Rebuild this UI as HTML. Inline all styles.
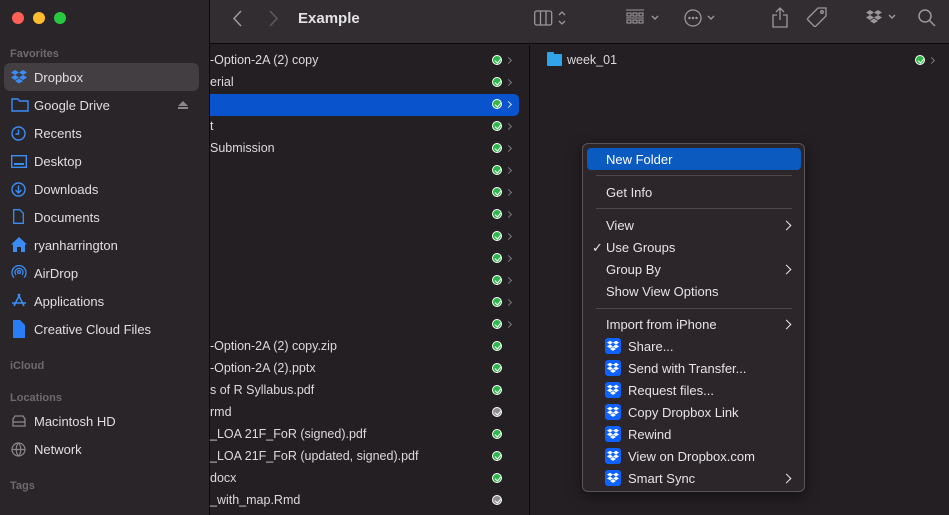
<!DOCTYPE html>
<html><head><style>
*{margin:0;padding:0;box-sizing:border-box}
body{width:949px;height:515px;overflow:hidden;background:#241f23;font-family:"Liberation Sans",sans-serif;color:#dedcde;font-size:13px;position:relative}
.side{position:absolute;left:0;top:0;width:209px;height:515px;background:#2a2528}
.vline{position:absolute;left:209px;top:0;width:1px;height:515px;background:#0c0a0b}
.tb{position:absolute;left:210px;top:0;right:0;height:44px;background:#322d31;border-bottom:1px solid #0c0a0b}
.dot{position:absolute;top:12px;width:12px;height:12px;border-radius:50%}
.sh{position:absolute;left:10px;font-size:11px;color:#6f6a6d;font-weight:bold}
.si{position:absolute;left:34px;font-size:13px;color:#e0dee0}
.ic{position:absolute;left:11px}
.sel{position:absolute;left:4px;top:63px;width:195px;height:28px;background:#433e42;border-radius:6px}
.row{position:absolute;left:210px;font-size:12.5px;color:#dcdadc;white-space:nowrap}
.ck{position:absolute;left:492px;width:10px;height:10px;border-radius:50%;background:#2eb84b;border:1px solid #fff}
.ck::after{content:"";position:absolute;left:2.5px;top:1px;width:3px;height:5px;border:solid #fff;border-width:0 1.5px 1.5px 0;transform:rotate(40deg)}
.ck.g{background:#8f8d8f}
.chv{position:absolute;left:506px;width:5px;height:5px;border-top:1.3px solid #7a767a;border-right:1.3px solid #7a767a;transform:rotate(45deg)}
.menu{position:absolute;left:582px;top:143px;width:223px;height:349px;background:#2c2529;border:1px solid #5a5458;border-radius:6px;box-shadow:0 4px 14px rgba(0,0,0,.5)}
.mi{position:absolute;left:23px;font-size:13px;color:#e6e4e6}
.sep{position:absolute;left:13px;width:196px;height:1px;background:#4e484c}
.ar{position:absolute;left:200px;width:7px;height:7px;border-top:1.6px solid #e6e4e6;border-right:1.6px solid #e6e4e6;transform:rotate(45deg)}
.db{position:absolute;left:22px;width:16px;height:16px;background:#0f62fe;border-radius:3px}
.db svg{position:absolute;left:2px;top:2px}
</style></head><body>
<div class="side">
<div class="dot" style="left:12px;background:#fe5f57"></div>
<div class="dot" style="left:33px;background:#febc2e"></div>
<div class="dot" style="left:54px;background:#28c840"></div>
<div class="sh" style="top:48px">Favorites</div>
<div class="sel"></div>
<svg class="ic" style="top:70px" width="16" height="14" viewBox="0 0 16 14" fill="#3a8df5"><path d="M4 0l4 2.5-4 2.5-4-2.5zM12 0l4 2.5-4 2.5-4-2.5zM0 7.5l4-2.5 4 2.5-4 2.5zM16 7.5l-4-2.5-4 2.5 4 2.5zM4 11l4-2.5 4 2.5-4 2.5z"/></svg>
<div class="si" style="top:70px">Dropbox</div>
<svg class="ic" style="top:98px" width="18" height="14" viewBox="0 0 18 14" fill="none" stroke="#3a8df5" stroke-width="1.4"><path d="M1 1h6l1.5 2H17v10H1z"/></svg>
<div class="si" style="top:98px">Google Drive</div>
<div style="position:absolute;left:178px;top:101px;width:0;height:0;border-left:5px solid transparent;border-right:5px solid transparent;border-bottom:5px solid #8a868a"></div>
<div style="position:absolute;left:178px;top:107px;width:10px;height:2px;background:#8a868a"></div>
<svg class="ic" style="top:126px" width="15" height="15" fill="none" stroke="#3a8df5" stroke-width="1.4"><circle cx="7.5" cy="7.5" r="6.5"/><path d="M7.5 3.5v4.5h-3"/></svg>
<div class="si" style="top:126px">Recents</div>
<svg class="ic" style="top:155px" width="16" height="13" fill="none" stroke="#3a8df5" stroke-width="1.4"><rect x=".7" y=".7" width="14.6" height="11.6"/><path d="M3 9h10" stroke-width="2"/></svg>
<div class="si" style="top:154px">Desktop</div>
<svg class="ic" style="top:182px" width="15" height="15" fill="none" stroke="#3a8df5" stroke-width="1.4"><circle cx="7.5" cy="7.5" r="6.5"/><path d="M7.5 3.5v7M4.5 8l3 3 3-3"/></svg>
<div class="si" style="top:182px">Downloads</div>
<svg class="ic" style="top:209px;left:13px" width="11" height="15" fill="none" stroke="#3a8df5" stroke-width="1.3"><path d="M.7.7h6l3.6 3.6v10H.7z"/></svg>
<div class="si" style="top:210px">Documents</div>
<svg class="ic" style="top:237px" width="16" height="15" fill="#3a8df5"><path d="M8 0L0 7.5h2V15h4v-5h4v5h4V7.5h2z"/></svg>
<div class="si" style="top:238px">ryanharrington</div>
<svg class="ic" style="top:265px" width="16" height="15" fill="none" stroke="#3a8df5" stroke-width="1.3"><circle cx="8" cy="7" r="1.5"/><path d="M5 10a4 4 0 1 1 6 0M3 12.5a7 7 0 1 1 10 0"/></svg>
<div class="si" style="top:266px">AirDrop</div>
<svg class="ic" style="top:293px" width="16" height="15" fill="none" stroke="#3a8df5" stroke-width="1.6"><path d="M9 1L3 13M7 1l6 12M1 10h14"/></svg>
<div class="si" style="top:294px">Applications</div>
<svg class="ic" style="top:320px;left:13px" width="12" height="18" fill="#2a7ef5"><path d="M0 0h7l5 5v13H0z"/></svg>
<div class="si" style="top:322px">Creative Cloud Files</div>
<div class="sh" style="top:360px">iCloud</div>
<div class="sh" style="top:392px">Locations</div>
<svg class="ic" style="top:415px" width="16" height="12" fill="none" stroke="#8a868a" stroke-width="1.3"><path d="M2 4L4 1h8l2 3v7H2z"/><path d="M2 7h12"/></svg>
<div class="si" style="top:414px">Macintosh HD</div>
<svg class="ic" style="top:442px" width="15" height="15" fill="none" stroke="#8a868a" stroke-width="1.2"><circle cx="7.5" cy="7.5" r="6.5"/><path d="M1 7.5h13M7.5 1c-3 3-3 10 0 13M7.5 1c3 3 3 10 0 13"/></svg>
<div class="si" style="top:442px">Network</div>
<div class="sh" style="top:480px">Tags</div>
</div>
<div class="vline"></div>
<div class="tb">
<svg style="position:absolute;left:23px;top:10px" width="10" height="17" fill="none" stroke="#9b979b" stroke-width="1.6"><path d="M8 1L1 8.5 8 16"/></svg>
<svg style="position:absolute;left:58px;top:10px" width="10" height="17" fill="none" stroke="#5b575b" stroke-width="1.6"><path d="M2 1l7 7.5L2 16"/></svg>
<div style="position:absolute;left:88px;top:10px;font-size:15px;font-weight:bold;color:#e4e2e4">Example</div>
<svg style="position:absolute;left:324px;top:10px" width="40" height="17" fill="none" stroke="#9b979b" stroke-width="1.3"><rect x=".7" y="1" width="17" height="14" rx="2"/><path d="M6.5 1v14M12 1v14M25 5l3-3 3 3M25 11l3 3 3-3"/></svg>
<svg style="position:absolute;left:416px;top:9px" width="36" height="17" fill="none" stroke="#9b979b" stroke-width="1.1"><path d="M0 1h18"/><rect x="1" y="4" width="4" height="3"/><rect x="7" y="4" width="4" height="3"/><rect x="13" y="4" width="4" height="3"/><rect x="1" y="11" width="4" height="3"/><rect x="7" y="11" width="4" height="3"/><rect x="13" y="11" width="4" height="3"/><path d="M0 9h18" /><path d="M26 7l3 3 3-3" stroke-width="1.4"/></svg>
<svg style="position:absolute;left:474px;top:8px" width="40" height="20" fill="none" stroke="#9b979b" stroke-width="1.3"><circle cx="9" cy="10" r="8"/><circle cx="5.5" cy="10" r=".6" fill="#9b979b"/><circle cx="9" cy="10" r=".6" fill="#9b979b"/><circle cx="12.5" cy="10" r=".6" fill="#9b979b"/><path d="M24 8l3 3 3-3" stroke-width="1.4"/></svg>
<svg style="position:absolute;left:562px;top:7px" width="16" height="21" fill="none" stroke="#9b979b" stroke-width="1.3"><path d="M8 13V1M4 5l4-4 4 4M5 8H1v12h14V8h-4"/></svg>
<svg style="position:absolute;left:596px;top:7px" width="22" height="22" fill="none" stroke="#9b979b" stroke-width="1.3"><path d="M12 1h8v8L10 19a1.5 1.5 0 0 1-2 0L2 13a1.5 1.5 0 0 1 0-2z"/><circle cx="16" cy="5" r="1.3"/></svg>
<svg style="position:absolute;left:656px;top:10px" width="36" height="15" fill="#9b979b"><path d="M4 0l4 2.5-4 2.5-4-2.5zM12 0l4 2.5-4 2.5-4-2.5zM0 7.5l4-2.5 4 2.5-4 2.5zM16 7.5l-4-2.5-4 2.5 4 2.5zM4 11l4-2.5 4 2.5-4 2.5z"/><path d="M23 5l3 3 3-3" fill="none" stroke="#9b979b" stroke-width="1.4"/></svg>
<svg style="position:absolute;left:708px;top:9px" width="18" height="18" fill="none" stroke="#9b979b" stroke-width="1.5"><circle cx="7" cy="7" r="6"/><path d="M11.5 11.5l5.5 5.5"/></svg>
</div>
<div style="position:absolute;left:529px;top:45px;width:1px;height:470px;background:#0c0a0b"></div>
<div style="position:absolute;left:210px;top:94px;width:309px;height:22px;background:#0953cc;border-radius:0 5px 5px 0"></div>
<div class="row" style="top:53px">-Option-2A (2) copy</div>
<div class="row" style="top:75px">erial</div>
<div class="row" style="top:119px">t</div>
<div class="row" style="top:141px">Submission</div>
<div class="row" style="top:339px">-Option-2A (2) copy.zip</div>
<div class="row" style="top:361px">-Option-2A (2).pptx</div>
<div class="row" style="top:383px">s of R Syllabus.pdf</div>
<div class="row" style="top:405px">rmd</div>
<div class="row" style="top:427px">_LOA 21F_FoR (signed).pdf</div>
<div class="row" style="top:449px">_LOA 21F_FoR (updated, signed).pdf</div>
<div class="row" style="top:471px">docx</div>
<div class="row" style="top:493px">_with_map.Rmd</div>
<div class="ck" style="top:55px"></div><div class="chv" style="top:58px"></div>
<div class="ck" style="top:77px"></div><div class="chv" style="top:80px"></div>
<div class="ck" style="top:99px"></div><div class="chv" style="top:102px;border-color:#cfd8f0"></div>
<div class="ck" style="top:121px"></div><div class="chv" style="top:124px"></div>
<div class="ck" style="top:143px"></div><div class="chv" style="top:146px"></div>
<div class="ck" style="top:165px"></div><div class="chv" style="top:168px"></div>
<div class="ck" style="top:187px"></div><div class="chv" style="top:190px"></div>
<div class="ck" style="top:209px"></div><div class="chv" style="top:212px"></div>
<div class="ck" style="top:231px"></div><div class="chv" style="top:234px"></div>
<div class="ck" style="top:253px"></div><div class="chv" style="top:256px"></div>
<div class="ck" style="top:275px"></div><div class="chv" style="top:278px"></div>
<div class="ck" style="top:297px"></div><div class="chv" style="top:300px"></div>
<div class="ck" style="top:319px"></div><div class="chv" style="top:322px"></div>
<div class="ck" style="top:341px"></div>
<div class="ck" style="top:363px"></div>
<div class="ck" style="top:385px"></div>
<div class="ck g" style="top:407px"></div>
<div class="ck" style="top:429px"></div>
<div class="ck" style="top:451px"></div>
<div class="ck" style="top:473px"></div>
<div class="ck g" style="top:495px"></div>
<div style="position:absolute;left:547px;top:54px;width:15px;height:12px;background:#2fa6e8;border-radius:1px"></div>
<div style="position:absolute;left:547px;top:52px;width:7px;height:3px;background:#2fa6e8;border-radius:1px"></div>
<div class="row" style="left:567px;top:53px">week_01</div>
<div class="ck" style="left:915px;top:55px"></div><div class="chv" style="left:929px;top:58px"></div>
<div class="menu">
<div style="position:absolute;left:4px;top:4px;width:214px;height:22px;background:#0b5ac0;border-radius:4px"></div>
<div class="mi" style="top:8px;color:#fff">New Folder</div>
<div class="sep" style="top:31px"></div>
<div class="mi" style="top:41px">Get Info</div>
<div class="sep" style="top:64px"></div>
<div class="mi" style="top:74px">View</div><div class="ar" style="top:78px"></div>
<div class="mi" style="top:96px"><span style="position:absolute;left:-14px">✓</span>Use Groups</div>
<div class="mi" style="top:118px">Group By</div><div class="ar" style="top:122px"></div>
<div class="mi" style="top:140px">Show View Options</div>
<div class="sep" style="top:164px"></div>
<div class="mi" style="top:173px">Import from iPhone</div><div class="ar" style="top:177px"></div>
<div class="db" style="top:194px"><svg width="12" height="12" viewBox="0 0 16 14" fill="#fff"><path d="M4 0l4 2.5-4 2.5-4-2.5zM12 0l4 2.5-4 2.5-4-2.5zM0 7.5l4-2.5 4 2.5-4 2.5zM16 7.5l-4-2.5-4 2.5 4 2.5zM4 11l4-2.5 4 2.5-4 2.5z"/></svg></div>
<div class="mi" style="left:45px;top:195px">Share...</div>
<div class="db" style="top:216px"><svg width="12" height="12" viewBox="0 0 16 14" fill="#fff"><path d="M4 0l4 2.5-4 2.5-4-2.5zM12 0l4 2.5-4 2.5-4-2.5zM0 7.5l4-2.5 4 2.5-4 2.5zM16 7.5l-4-2.5-4 2.5 4 2.5zM4 11l4-2.5 4 2.5-4 2.5z"/></svg></div>
<div class="mi" style="left:45px;top:217px">Send with Transfer...</div>
<div class="db" style="top:238px"><svg width="12" height="12" viewBox="0 0 16 14" fill="#fff"><path d="M4 0l4 2.5-4 2.5-4-2.5zM12 0l4 2.5-4 2.5-4-2.5zM0 7.5l4-2.5 4 2.5-4 2.5zM16 7.5l-4-2.5-4 2.5 4 2.5zM4 11l4-2.5 4 2.5-4 2.5z"/></svg></div>
<div class="mi" style="left:45px;top:239px">Request files...</div>
<div class="db" style="top:260px"><svg width="12" height="12" viewBox="0 0 16 14" fill="#fff"><path d="M4 0l4 2.5-4 2.5-4-2.5zM12 0l4 2.5-4 2.5-4-2.5zM0 7.5l4-2.5 4 2.5-4 2.5zM16 7.5l-4-2.5-4 2.5 4 2.5zM4 11l4-2.5 4 2.5-4 2.5z"/></svg></div>
<div class="mi" style="left:45px;top:261px">Copy Dropbox Link</div>
<div class="db" style="top:282px"><svg width="12" height="12" viewBox="0 0 16 14" fill="#fff"><path d="M4 0l4 2.5-4 2.5-4-2.5zM12 0l4 2.5-4 2.5-4-2.5zM0 7.5l4-2.5 4 2.5-4 2.5zM16 7.5l-4-2.5-4 2.5 4 2.5zM4 11l4-2.5 4 2.5-4 2.5z"/></svg></div>
<div class="mi" style="left:45px;top:283px">Rewind</div>
<div class="db" style="top:304px"><svg width="12" height="12" viewBox="0 0 16 14" fill="#fff"><path d="M4 0l4 2.5-4 2.5-4-2.5zM12 0l4 2.5-4 2.5-4-2.5zM0 7.5l4-2.5 4 2.5-4 2.5zM16 7.5l-4-2.5-4 2.5 4 2.5zM4 11l4-2.5 4 2.5-4 2.5z"/></svg></div>
<div class="mi" style="left:45px;top:305px">View on Dropbox.com</div>
<div class="db" style="top:326px"><svg width="12" height="12" viewBox="0 0 16 14" fill="#fff"><path d="M4 0l4 2.5-4 2.5-4-2.5zM12 0l4 2.5-4 2.5-4-2.5zM0 7.5l4-2.5 4 2.5-4 2.5zM16 7.5l-4-2.5-4 2.5 4 2.5zM4 11l4-2.5 4 2.5-4 2.5z"/></svg></div>
<div class="mi" style="left:45px;top:327px">Smart Sync</div><div class="ar" style="top:331px"></div>
</div>
</body></html>
